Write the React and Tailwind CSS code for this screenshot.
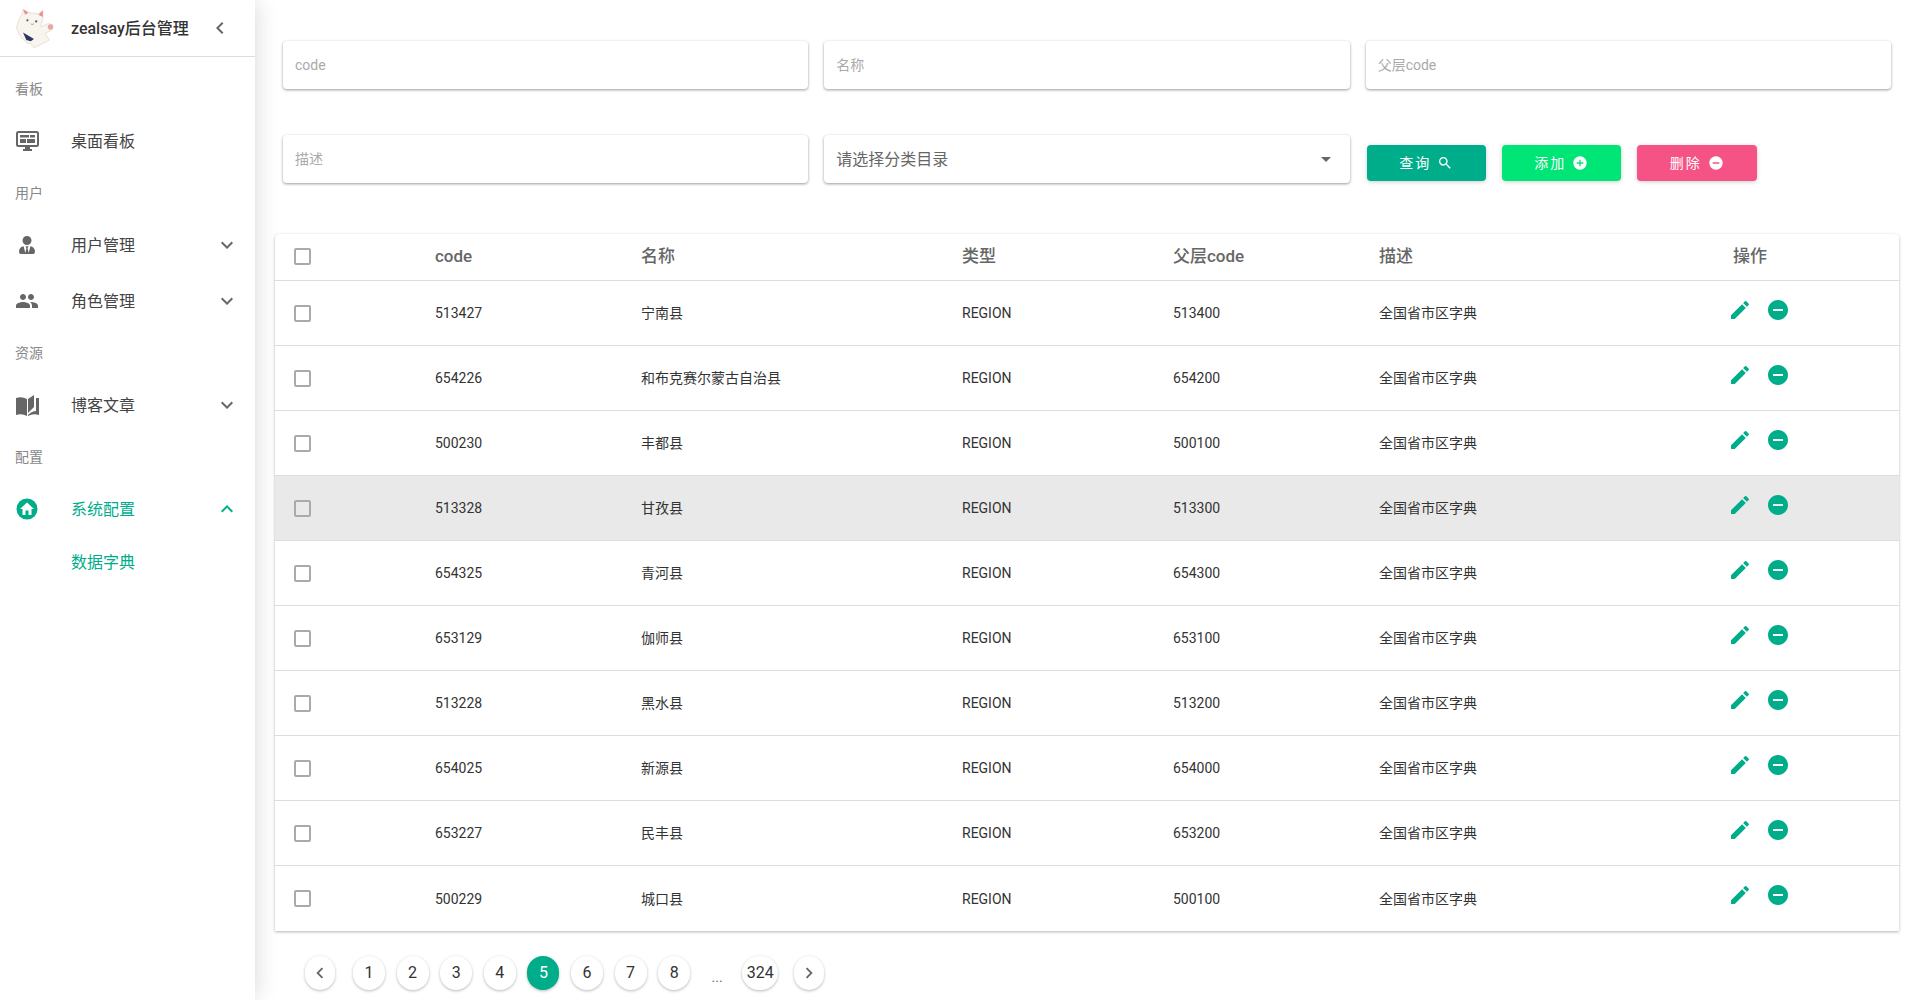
import React from 'react';
import { FaUserTie } from 'react-icons/fa';
import {
  MdAddCircle, MdArrowDropDown, MdChevronLeft, MdChevronRight, MdEdit, MdExpandLess, MdExpandMore,
  MdPeople, MdRemoveCircle, MdSearch,
} from 'react-icons/md';

const rows = [
  ['513427', '宁南县', '513400'],
  ['654226', '和布克赛尔蒙古自治县', '654200'],
  ['500230', '丰都县', '500100'],
  ['513328', '甘孜县', '513300'],
  ['654325', '青河县', '654300'],
  ['653129', '伽师县', '653100'],
  ['513228', '黑水县', '513200'],
  ['654025', '新源县', '654000'],
  ['653227', '民丰县', '653200'],
  ['500229', '城口县', '500100'],
];

const CatLogo = () => (
  <svg width="44" height="44" viewBox="0 0 40 40" className="shrink-0">
    <path d="M9 8 L10 3 L15 6 L24 7 L28 4 L28 12 L26 19 L33 16 L37 17 L36 22 L30 25 L34 31 L20 38 L17 34 L14 34 L8 28 L4 20 L6 13 Z" fill="#f8f4ee" stroke="#e6ddd0" strokeWidth="0.8" />
    <path d="M10 3 L12 8 L15 6 Z" fill="#e98f95" />
    <path d="M28 4 L24 8 L28 10 Z" fill="#e98f95" />
    <circle cx="14" cy="13" r="1" fill="#555" />
    <circle cx="22" cy="14" r="1" fill="#555" />
    <path d="M17 16 Q18 18 20 16" stroke="#a88" strokeWidth="0.7" fill="none" />
    <path d="M10 24 L20 30 L17 32 L13 31 Z" fill="#2b3560" />
    <circle cx="35" cy="19" r="2.5" fill="#e8a9a0" />
  </svg>
);

const MonitorIcon = () => (
  <svg width="23" height="20" viewBox="0 0 23 20" fill="currentColor">
    <rect x="1" y="1" width="21" height="14" rx="1.5" fill="none" stroke="currentColor" strokeWidth="2" />
    <rect x="4" y="4" width="9" height="2.5" />
    <rect x="14" y="4" width="5" height="2.5" />
    <rect x="4" y="8" width="6" height="4" />
    <rect x="11" y="8" width="8" height="4" />
    <rect x="9" y="15" width="5" height="3" />
    <rect x="7" y="18" width="9" height="2" />
  </svg>
);

const BookIcon = () => (
  <svg width="23" height="21" viewBox="0 0 23 21" fill="currentColor">
    <path d="M0 3 Q6 1 11 4 V21 Q6 18 0 20 Z" />
    <path d="M12 4 L18 0 V12 L12 18 Z" />
    <path d="M20 3 H23 V20 Q17 18 12 21 V20 Q16 16 20 16 Z" />
  </svg>
);

const HomeBadge = () => (
  <svg width="22" height="22" viewBox="0 0 22 22" className="shrink-0">
    <circle cx="11" cy="11" r="10.5" fill="#00ad8a" />
    <path d="M11 4.5 L18 11 H15.5 V17 H12.5 V12.5 H9.5 V17 H6.5 V11 H4 Z" fill="#fff" />
  </svg>
);

const SectionLabel = ({ children }) => (
  <div className="flex h-[52px] items-center pl-[15px] text-sm text-[#888]">{children}</div>
);

const MenuItem = ({ icon, label, arrow, active }) => (
  <div className={`flex h-[52px] items-center pl-[16px] pr-[16px] text-base ${active ? 'text-[#00ad8a]' : 'text-[#444]'}`}>
    <div className={`flex w-[55px] shrink-0 items-center ${active ? 'text-[#00ad8a]' : 'text-[#666]'}`}>{icon}</div>
    <span className="flex-1 pt-[2px]">{label}</span>
    {arrow}
  </div>
);

const Sidebar = () => (
  <aside className="z-10 flex h-full w-[255px] shrink-0 flex-col bg-white shadow-[0_0_22px_rgba(0,0,0,0.16)]">
    <div className="flex h-[57px] items-center border-b border-[#ddd] pl-[12px] pr-[23px]">
      <CatLogo />
      <span className="ml-[15px] flex-1 pt-[2px] text-base font-medium text-[#333]">zealsay后台管理</span>
      <MdChevronLeft size={24} className="text-[#666]" />
    </div>
    <div className="flex flex-col pt-[6px]">
      <SectionLabel>看板</SectionLabel>
      <MenuItem icon={<MonitorIcon />} label="桌面看板" />
      <SectionLabel>用户</SectionLabel>
      <MenuItem icon={<FaUserTie size={18} className="ml-[2px]" />} label="用户管理" arrow={<MdExpandMore size={24} className="text-[#666]" />} />
      <div className="mt-[4px]">
        <MenuItem icon={<MdPeople size={24} className="-ml-[1px]" />} label="角色管理" arrow={<MdExpandMore size={24} className="text-[#666]" />} />
      </div>
      <SectionLabel>资源</SectionLabel>
      <MenuItem icon={<BookIcon />} label="博客文章" arrow={<MdExpandMore size={24} className="text-[#666]" />} />
      <SectionLabel>配置</SectionLabel>
      <MenuItem icon={<HomeBadge />} label="系统配置" active arrow={<MdExpandLess size={24} className="text-[#00ad8a]" />} />
      <div className="flex h-[52px] items-center pl-[71px] pt-[3px] text-base text-[#00ad8a]">数据字典</div>
    </div>
  </aside>
);

const Field = ({ placeholder }) => (
  <input
    placeholder={placeholder}
    className="h-[48px] w-full min-w-0 rounded bg-white px-[12px] text-sm text-[#333] shadow-[0_1px_3px_rgba(0,0,0,0.4)] outline-none placeholder:text-[#aaa]"
  />
);

const ActionButton = ({ color, label, icon, width }) => (
  <button className={`flex h-[36px] items-center justify-center gap-[6px] rounded text-sm text-white shadow-[0_1px_4px_rgba(0,0,0,0.2)] ${color} ${width}`}>
    <span className="tracking-[2px]">{label}</span>
    {icon}
  </button>
);

const Filters = () => (
  <div className="grid grid-cols-3 gap-x-[16px] gap-y-[46px] pl-[8px] pr-[8px]">
    <Field placeholder="code" />
    <Field placeholder="名称" />
    <Field placeholder="父层code" />
    <Field placeholder="描述" />
    <div className="flex h-[48px] min-w-0 items-center justify-between rounded bg-white pl-[12px] pr-[12px] text-base text-[#666] shadow-[0_1px_3px_rgba(0,0,0,0.4)]">
      <span className="pt-[2px]">请选择分类目录</span>
      <MdArrowDropDown size={24} className="text-[#666]" />
    </div>
    <div className="flex items-start gap-[16px] pl-[1px] pt-[10px]">
      <ActionButton color="bg-[#00ad8a]" width="w-[119px]" label="查询" icon={<MdSearch size={16} />} />
      <ActionButton color="bg-[#00e676]" width="w-[119px]" label="添加" icon={<MdAddCircle size={16} />} />
      <ActionButton color="bg-[#f55385]" width="w-[120px]" label="删除" icon={<MdRemoveCircle size={16} />} />
    </div>
  </div>
);

const Checkbox = () => (
  <span className="block h-[17px] w-[17px] rounded-[2px] border-2 border-[#aaa]" />
);

const gridCols = 'grid grid-cols-[141px_206px_321px_211px_206px_354px_1fr] items-center pl-[19px]';

const DataTable = () => (
  <div className="mt-[51px] rounded-t bg-white shadow-[0_1px_3px_rgba(0,0,0,0.3)]">
    <div className={`${gridCols} h-[47px] border-b border-[#ddd] text-[17px] font-medium text-[#666]`}>
      <div className="-mt-[1px]"><Checkbox /></div>
      <span>code</span>
      <span>名称</span>
      <span>类型</span>
      <span>父层code</span>
      <span>描述</span>
      <span>操作</span>
    </div>
    {rows.map(([code, name, parent], index) => (
      <div
        key={code}
        className={`${gridCols} h-[65px] border-b border-[#ddd] text-sm text-[#333] last:border-b-0 ${index === 3 ? 'bg-[#e9e9e9]' : ''}`}
      >
        <Checkbox />
        <span>{code}</span>
        <span>{name}</span>
        <span>REGION</span>
        <span>{parent}</span>
        <span>全国省市区字典</span>
        <div className="-ml-[5px] -mt-[7px] flex items-center gap-[14px] text-[#00ad8a]">
          <MdEdit size={24} />
          <MdRemoveCircle size={24} />
        </div>
      </div>
    ))}
  </div>
);

const PageButton = ({ children, active, width = 'w-[32px]' }) => (
  <div className={`flex h-[34px] items-center justify-center rounded-full text-base shadow-[0_1px_3px_rgba(0,0,0,0.28)] ${width} ${active ? 'bg-[#00ad8a] text-white' : 'bg-white text-[#333]'}`}>
    {children}
  </div>
);

const Pagination = () => (
  <div className="mt-[25px] flex items-center pl-[30px]">
    <PageButton width="w-[30px]"><MdChevronLeft size={22} className="text-[#666]" /></PageButton>
    <div className="ml-[18px] flex items-center gap-[11.6px]">
      {[1, 2, 3, 4, 5, 6, 7, 8].map((page) => (
        <PageButton key={page} active={page === 5}>{page}</PageButton>
      ))}
    </div>
    <span className="ml-[16px] w-[22px] pt-[8px] text-center text-sm text-[#666]">...</span>
    <div className="ml-[14px]">
      <PageButton width="w-[36px]">324</PageButton>
    </div>
    <div className="ml-[16px]">
      <PageButton width="w-[30px]"><MdChevronRight size={22} className="text-[#666]" /></PageButton>
    </div>
  </div>
);

export default function App() {
  return (
    <div className="flex h-screen overflow-hidden bg-white font-['Roboto','Noto_Sans_CJK_SC',sans-serif]">
      <Sidebar />
      <main className="min-w-0 flex-1 pl-[20px] pr-[19px] pt-[41px]">
        <Filters />
        <DataTable />
        <Pagination />
      </main>
    </div>
  );
}
